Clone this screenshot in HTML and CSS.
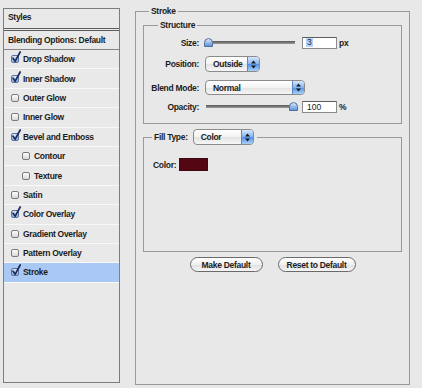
FILE: index.html
```html
<!DOCTYPE html>
<html lang="en">
<head>
<meta charset="utf-8">
<title>Layer Style</title>
<link rel="stylesheet" href="styles.css">
</head>
<body>
<div class="dialog">
  <div class="styles-list">
    <div class="list-head">Styles</div>
    <div class="list-blend">Blending Options: Default</div>
    <div class="item"><span class="cb on"><svg width="11" height="12" viewBox="0 0 11 12"><path d="M2 7.2 L4.2 10.2 L9.2 1" fill="none" stroke="#1b2b5c" stroke-width="1.7" stroke-linecap="round" stroke-linejoin="round"/></svg></span>Drop Shadow</div>
    <div class="item"><span class="cb on"><svg width="11" height="12" viewBox="0 0 11 12"><path d="M2 7.2 L4.2 10.2 L9.2 1" fill="none" stroke="#1b2b5c" stroke-width="1.7" stroke-linecap="round" stroke-linejoin="round"/></svg></span>Inner Shadow</div>
    <div class="item"><span class="cb"></span>Outer Glow</div>
    <div class="item"><span class="cb"></span>Inner Glow</div>
    <div class="item"><span class="cb on"><svg width="11" height="12" viewBox="0 0 11 12"><path d="M2 7.2 L4.2 10.2 L9.2 1" fill="none" stroke="#1b2b5c" stroke-width="1.7" stroke-linecap="round" stroke-linejoin="round"/></svg></span>Bevel and Emboss</div>
    <div class="item sub"><span class="cb"></span>Contour</div>
    <div class="item sub"><span class="cb"></span>Texture</div>
    <div class="item"><span class="cb"></span>Satin</div>
    <div class="item"><span class="cb on"><svg width="11" height="12" viewBox="0 0 11 12"><path d="M2 7.2 L4.2 10.2 L9.2 1" fill="none" stroke="#1b2b5c" stroke-width="1.7" stroke-linecap="round" stroke-linejoin="round"/></svg></span>Color Overlay</div>
    <div class="item"><span class="cb"></span>Gradient Overlay</div>
    <div class="item"><span class="cb"></span>Pattern Overlay</div>
    <div class="item selected"><span class="cb on"><svg width="11" height="12" viewBox="0 0 11 12"><path d="M2 7.2 L4.2 10.2 L9.2 1" fill="none" stroke="#1b2b5c" stroke-width="1.7" stroke-linecap="round" stroke-linejoin="round"/></svg></span>Stroke</div>
  </div>

  <fieldset class="group outer">
    <legend>Stroke</legend>

    <fieldset class="group structure">
      <legend>Structure</legend>
      <div class="row r1">
        <span class="lbl">Size:</span>
        <span class="slider"><svg class="thumb" width="9" height="9" viewBox="0 0 9 9"><defs><linearGradient id="tg" x1="0" y1="0" x2="0" y2="1"><stop offset="0" stop-color="#e4eefb"/><stop offset="0.5" stop-color="#9cbde9"/><stop offset="1" stop-color="#5d8fd6"/></linearGradient></defs><path d="M0.5 8.5 V4.5 Q0.5 0.8 4.5 0.5 Q8.5 0.8 8.5 4.5 V8.5 Z" fill="url(#tg)" stroke="#4f6f9f"/></svg></span>
        <span class="field"><span class="sel">3</span></span>
        <span class="unit">px</span>
      </div>
      <div class="row r2">
        <span class="lbl">Position:</span>
        <span class="popup w-pos"><span class="ptext">Outside</span><span class="cap"><svg width="5" height="9" viewBox="0 0 5 9"><path d="M0 3.5 L2.5 0.5 L5 3.5Z M0 5.5 L2.5 8.5 L5 5.5Z" fill="#1a1a1a"/></svg></span></span>
      </div>
      <div class="row r3">
        <span class="lbl">Blend Mode:</span>
        <span class="popup w-blend"><span class="ptext">Normal</span><span class="cap"><svg width="5" height="9" viewBox="0 0 5 9"><path d="M0 3.5 L2.5 0.5 L5 3.5Z M0 5.5 L2.5 8.5 L5 5.5Z" fill="#1a1a1a"/></svg></span></span>
      </div>
      <div class="row r4">
        <span class="lbl">Opacity:</span>
        <span class="slider max"><svg class="thumb" width="9" height="9" viewBox="0 0 9 9"><path d="M0.5 8.5 V4.5 Q0.5 0.8 4.5 0.5 Q8.5 0.8 8.5 4.5 V8.5 Z" fill="url(#tg)" stroke="#4f6f9f"/></svg></span>
        <span class="field">100</span>
        <span class="unit">%</span>
      </div>
    </fieldset>

    <fieldset class="group fill">
      <legend><span class="legend-row"><span class="fill-lbl">Fill Type:</span><span class="popup w-fill"><span class="ptext">Color</span><span class="cap"><svg width="5" height="9" viewBox="0 0 5 9"><path d="M0 3.5 L2.5 0.5 L5 3.5Z M0 5.5 L2.5 8.5 L5 5.5Z" fill="#1a1a1a"/></svg></span></span></span></legend>
      <div class="color-row"><span class="color-lbl">Color:</span><span class="swatch"></span></div>
    </fieldset>

    <div class="buttons">
      <button class="btn b-make">Make Default</button>
      <button class="btn b-reset">Reset to Default</button>
    </div>
  </fieldset>
</div>
</body>
</html>
```
FILE: styles.css
```css
* { box-sizing: border-box; }

html, body { margin: 0; }

body {
  width: 422px;
  height: 388px;
  overflow: hidden;
  background: #e8e8e8;
  font-family: "Liberation Sans", Arial, sans-serif;
  font-size: 8.5px;
  font-weight: bold;
  letter-spacing: -0.3px;
  color: #1c1c1c;
}

.dialog {
  display: flex;
  align-items: flex-start;
  padding-left: 3px;
}

/* ---------- left list ---------- */
.styles-list {
  margin-top: 8px;
  width: 117px;
  height: 375px;
  border: 1px solid #7d7d7d;
  background: #e9e9e9;
  display: flex;
  flex-direction: column;
}

.list-head {
  height: 22px;
  line-height: 17px;
  padding-left: 4px;
  border-bottom: 3px double #5e5e5e;
}

.list-blend {
  height: 19px;
  line-height: 18px;
  padding-left: 4px;
  border-bottom: 1px solid #848484;
}

.item {
  height: 19.4px;
  flex: none;
  display: flex;
  align-items: center;
  padding-left: 7px;
  border-bottom: 1px solid #f8f8f8;
}

.item.sub { padding-left: 18px; }

.item.selected { background: #a9c8f3; }

.cb {
  position: relative;
  flex: none;
  width: 8px;
  height: 8px;
  margin-right: 4px;
  border: 1px solid #7b7b7b;
  border-radius: 2px;
  background: linear-gradient(#fdfdfd, #d9d9d9);
}

.cb.on {
  border-color: #5a72a0;
  background: linear-gradient(#dce8f9, #8db0e4);
}

.cb svg {
  position: absolute;
  left: -1px;
  top: -5px;
  overflow: visible;
}

/* ---------- group boxes ---------- */
.group {
  margin: 0;
  padding: 0;
  min-width: 0;
  border: 1px solid #999999;
}

.group > legend {
  padding: 0 2px;
  height: 12px;
  line-height: 12px;
}

.outer {
  margin-top: 5px;
  margin-left: 15px;
  width: 275px;
  padding: 2px 7px 112px;
}

.outer > legend { margin-left: 6px; }

.structure { padding: 5px 0 10px; }

.structure > legend { margin-left: 14px; }

.row {
  display: flex;
  align-items: center;
}

.r1 { height: 13px; }
.r2 { height: 16px; margin-top: 7px; }
.r3 { height: 15px; margin-top: 8px; }
.r4 { height: 13px; margin-top: 5px; }

.lbl {
  width: 55px;
  margin-right: 6px;
  text-align: right;
  flex: none;
}

.slider {
  width: 93px;
  height: 9px;
  margin-right: 4px;
  display: flex;
  align-items: center;
  background: linear-gradient(#565656, #9c9c9c) no-repeat 1px 50% / 89px 3px;
}

.slider.max { justify-content: flex-end; }

.thumb { display: block; margin-left: -1px; }
.slider.max .thumb { margin-left: 0; }

.field {
  width: 35px;
  height: 12px;
  padding-left: 3px;
  display: flex;
  align-items: center;
  background: #ffffff;
  border: 1px solid #8a8a8a;
  border-top-color: #5c5c5c;
  font-weight: normal;
  letter-spacing: 0;
}

.r4 .field { padding-left: 4px; }

.sel {
  background: #b4d3fc;
  padding: 0 1px;
  line-height: 9px;
}

.unit { margin-left: 2px; }

/* popup buttons */
.popup {
  display: flex;
  align-items: stretch;
  border: 1px solid #8b8b8b;
  border-radius: 4px;
  overflow: hidden;
  background: linear-gradient(#ffffff, #f3f3f3 50%, #e3e3e3 51%, #f6f6f6);
}

.ptext {
  flex: 1;
  display: flex;
  align-items: center;
  padding-left: 7px;
}

.cap {
  width: 12px;
  flex: none;
  display: flex;
  align-items: center;
  justify-content: center;
  border-left: 1px solid #5b86c2;
  background: linear-gradient(#d6e7fc, #84b3ee 50%, #4f8fe4 51%, #a9d0f8);
}

.w-pos { width: 55px; height: 16px; }
.w-blend { width: 100px; height: 15px; }
.w-fill { width: 61px; height: 16px; }

/* fill type */
.fill {
  margin-top: 5px;
  padding: 13px 0 80px;
}

.fill > legend {
  margin-left: 8px;
  padding: 0 3px 0 2px;
  height: 16px;
  line-height: 16px;
}

.legend-row {
  display: flex;
  align-items: center;
  height: 16px;
}

.fill-lbl { margin-right: 5px; }

.color-row {
  display: flex;
  align-items: center;
  height: 13px;
  margin-left: 9px;
}

.color-lbl { margin-right: 3px; }

.swatch {
  width: 29px;
  height: 13px;
  background: #540613;
  border: 1px solid #3b0a12;
}

/* buttons */
.buttons {
  display: flex;
  justify-content: center;
  gap: 15px;
  margin-top: 5px;
}

.btn {
  height: 15px;
  padding: 0;
  font: inherit;
  letter-spacing: inherit;
  color: inherit;
  border: 1px solid #6a6a6a;
  border-radius: 8px;
  background: linear-gradient(#ffffff, #f0f0f0 50%, #e0e0e0 51%, #f5f5f5);
}

.b-make { width: 73px; }
.b-reset { width: 78px; }
```
